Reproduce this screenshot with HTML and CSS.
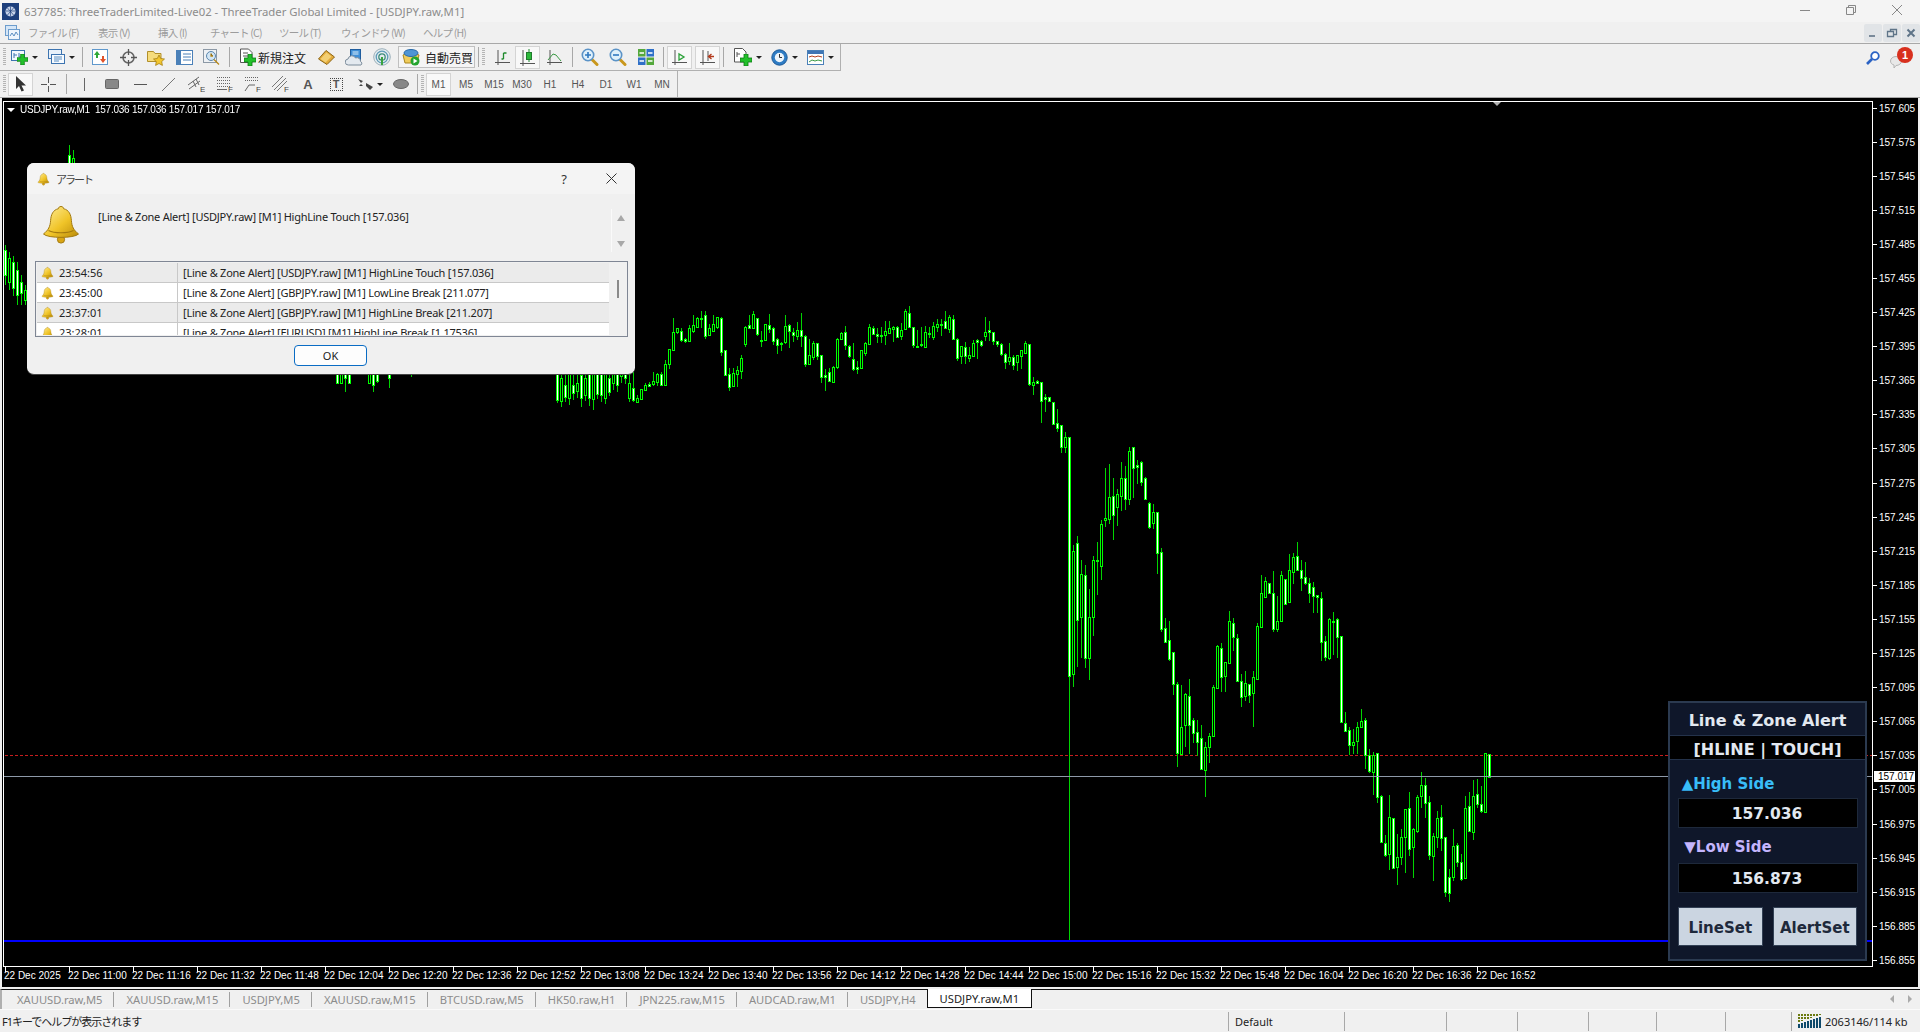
FILE: index.html
```html
<!DOCTYPE html>
<html lang="ja">
<head>
    <meta charset="UTF-8">
    <title>637785: ThreeTraderLimited-Live02</title>
    <link rel="stylesheet" href="styles.css">
</head>
<body>
    <svg class="defs" width="0" height="0">
        <defs>
            <linearGradient id="gold" x1="0" y1="0" x2="1" y2="1">
                <stop offset="0" stop-color="#fff0a0"/>
                <stop offset="0.55" stop-color="#f0c428"/>
                <stop offset="1" stop-color="#b98a08"/>
            </linearGradient>
            <symbol id="bell" viewBox="0 0 40 40">
                <circle cx="20" cy="35.5" r="3.6" fill="#d9a514" stroke="#a37a10"/>
                <path d="M20 2.5c-1.5 0-2.5.8-2.6 2.2C12 6 10 10.500 9.600 16.500 9.200 22.500 7.500 26 2.500 30c4 4.500 31 4.500 35 0-5-4-6.700-7.500-7.100-13.500C30 10.500 28 6 22.600 4.700 22.500 3.300 21.500 2.500 20 2.500z" fill="url(#gold)" stroke="#a37a10"/>
                <path d="M7.500 26.500c6 3 19 3 25 0" fill="none" stroke="#a37a10" stroke-width="1.200"/>
            </symbol>
            <symbol id="plus" viewBox="0 0 12 12">
                <path d="M4 0h4v4h4v4H8v4H4V8H0V4h4z" fill="#22c02a" stroke="#0c7a14" stroke-width="0.800"/>
            </symbol>
            <symbol id="lens" viewBox="0 0 18 18">
                <path d="M10.500 11l5.500 5.500" stroke="#c9971c" stroke-width="3" stroke-linecap="round"/>
                <circle cx="7" cy="7" r="5.700" fill="#dff0fb" stroke="#5b93c7" stroke-width="1.600"/>
            </symbol>
        </defs>
    </svg>

    <div class="app">
        <header class="titlebar">
            <svg class="app-icon" width="17" height="17" viewBox="0 0 17 17">
                <rect width="17" height="17" fill="#1d3f7c"/>
                <circle cx="8.500" cy="8.500" r="5" fill="#c8d4ea"/>
                <path d="M4 8h9M8.500 3.500v10M5.500 5l6 7M11.500 5l-6 7" stroke="#1d3f7c" stroke-width="0.700"/>
            </svg>
            <span class="title-text">637785: ThreeTraderLimited-Live02 - ThreeTrader Global Limited - [USDJPY.raw,M1]</span>
            <div class="win-controls">
                <svg width="46" height="22" viewBox="0 0 46 22"><path d="M18 10.500h10" stroke="#888"/></svg>
                <svg width="46" height="22" viewBox="0 0 46 22"><path d="M18.500 7.500h7v7h-7zM20.500 7.500v-2h7v7h-2" fill="none" stroke="#888"/></svg>
                <svg width="46" height="22" viewBox="0 0 46 22"><path d="M18 5l10 10M28 5L18 15" stroke="#888"/></svg>
            </div>
        </header>

        <nav class="menubar">
            <svg class="menu-icon" width="15" height="15" viewBox="0 0 15 15">
                <rect x="0.500" y="0.500" width="11" height="10" fill="#d5e6f7" stroke="#6c9ccc"/>
                <rect x="3.500" y="4.500" width="11" height="10" fill="#eef5fc" stroke="#6c9ccc"/>
                <path d="M5 11l2-3 2 3 2-4 2 3" fill="none" stroke="#5a8ec2"/>
            </svg>
            <span class="menu-item m1">ファイル (F)</span>
            <span class="menu-item m2">表示 (V)</span>
            <span class="menu-item m3">挿入 (I)</span>
            <span class="menu-item m4">チャート (C)</span>
            <span class="menu-item m5">ツール (T)</span>
            <span class="menu-item m6">ウィンドウ (W)</span>
            <span class="menu-item m7">ヘルプ (H)</span>
            <div class="mdi-controls">
                <span class="mdi-btn"><svg width="10" height="10" viewBox="0 0 10 10"><path d="M1 8h6" stroke="#7a8a9a" stroke-width="2"/></svg></span>
                <span class="mdi-btn"><svg width="12" height="10" viewBox="0 0 12 10"><path d="M1.500 3.500h6v5h-6zM4.500 3V1.500h6v5H8" fill="none" stroke="#5f7488" stroke-width="1.300"/></svg></span>
                <span class="mdi-btn"><svg width="10" height="10" viewBox="0 0 10 10"><path d="M1.500 1.500l7 7M8.500 1.500l-7 7" stroke="#5f7488" stroke-width="2"/></svg></span>
            </div>
        </nav>

        <div class="toolrow row-main">
            <div class="toolbar tb-main">
                <i class="grip"></i>
                <span class="drop">
                    <svg width="17" height="16" viewBox="0 0 17 16">
                        <rect x="0.500" y="1.500" width="13" height="10" fill="#f3f8fd" stroke="#3d74b0"/>
                        <path d="M3 4v5M3 6h3M8 4v4h3" fill="none" stroke="#3d74b0"/>
                        <use href="#plus" x="6" y="5" width="11" height="11"/>
                    </svg><b class="caret"></b>
                </span>
                <span class="drop d-second">
                    <svg width="17" height="16" viewBox="0 0 17 16">
                        <rect x="0.500" y="0.500" width="13" height="9" fill="#e8f1fa" stroke="#3d74b0"/>
                        <rect x="3.500" y="5.500" width="13" height="9" fill="#f7fbff" stroke="#3d74b0"/>
                        <path d="M6 8h8M6 10h8M6 12h5" stroke="#5a8ec2"/>
                    </svg><b class="caret"></b>
                </span>
                <i class="sep"></i>
                <span class="tool">
                    <svg width="16" height="16" viewBox="0 0 16 16">
                        <rect x="0.500" y="0.500" width="15" height="15" fill="#fff" stroke="#5f98cc"/>
                        <path d="M5 2l3 4H6v3H4V6H2z" fill="#2ea836"/>
                        <path d="M11 14l-3-4h2V7h2v3h2z" fill="#e0522a"/>
                    </svg>
                </span>
                <span class="tool">
                    <svg width="17" height="17" viewBox="0 0 17 17">
                        <circle cx="8.500" cy="8.500" r="5.500" fill="none" stroke="#666" stroke-width="1.500"/>
                        <path d="M8.500 0v6M8.500 11v6M0 8.500h6M11 8.500h6" stroke="#555" stroke-width="1.300"/>
                    </svg>
                </span>
                <span class="tool">
                    <svg width="18" height="17" viewBox="0 0 18 17">
                        <path d="M0.500 2.500h6l1.500 2h6v8h-13.500z" fill="#f6dc7c" stroke="#b18f2a"/>
                        <path d="M12 6l1.700 3.500 3.800.5-2.800 2.600.7 3.800-3.400-1.900-3.400 1.900.7-3.800L6.500 10l3.800-.5z" fill="#f2c62e" stroke="#a67f12" stroke-width="0.800"/>
                    </svg>
                </span>
                <span class="tool">
                    <svg width="17" height="15" viewBox="0 0 17 15">
                        <rect x="0.500" y="0.500" width="16" height="14" fill="#fff" stroke="#4a80b8"/>
                        <rect x="1" y="1" width="4" height="13" fill="#4a80b8"/>
                        <path d="M7 4h8M7 7h8M7 10h8" stroke="#4a80b8"/>
                    </svg>
                </span>
                <span class="tool">
                    <svg width="18" height="18" viewBox="0 0 18 18">
                        <rect x="0.500" y="1.500" width="13" height="13" fill="#eef1f4" stroke="#8c99a6"/>
                        <circle cx="8" cy="8" r="4.500" fill="#d2e6f5" stroke="#5b86ad"/>
                        <path d="M8 5.500V8h2M11 11.500l5 5" stroke="#b8891a" stroke-width="1.300"/>
                    </svg>
                </span>
                <i class="sep"></i>
                <span class="order">
                    <svg width="16" height="18" viewBox="0 0 16 18">
                        <path d="M0.500 1h8l3.500 3.500v10h-11.500z" fill="#fff" stroke="#555"/>
                        <path d="M3 5h5M3 8h6" stroke="#555"/>
                        <use href="#plus" x="4" y="6" width="12" height="12"/>
                    </svg>
                    <span class="tool-label">新規注文</span>
                </span>
                <span class="tool">
                    <svg width="17" height="15" viewBox="0 0 17 15">
                        <path d="M0.500 9L8 0.500 16.500 7 9 14.500z" fill="#e2ab3a" stroke="#8c6516"/>
                        <path d="M2.500 9L8.500 2.500l5 4-6 6z" fill="#f3cf73"/>
                    </svg>
                </span>
                <span class="tool">
                    <svg width="18" height="17" viewBox="0 0 18 17">
                        <rect x="5.500" y="0.500" width="10" height="11" fill="#3f8ed6" stroke="#1f5d9e"/>
                        <path d="M7.500 3h6M7.500 5h6" stroke="#dff0fb"/>
                        <path d="M3.500 16a3 3 0 0 1-.5-6 4 4 0 0 1 7.500-1 3.500 3.500 0 0 1 5 3.500 2 2 0 0 1 .5 3.500z" fill="#e3e9ef" stroke="#7b8b9a"/>
                    </svg>
                </span>
                <span class="tool">
                    <svg width="18" height="18" viewBox="0 0 18 18">
                        <circle cx="9" cy="9" r="8.300" fill="#e4ecef" stroke="#9cb0ba"/>
                        <circle cx="9" cy="9" r="5.800" fill="none" stroke="#5e9bb8" stroke-width="1.300"/>
                        <circle cx="9" cy="9" r="3.200" fill="none" stroke="#3f8d7c" stroke-width="1.300"/>
                        <path d="M9 9v8" stroke="#39a23f" stroke-width="2"/>
                    </svg>
                </span>
                <span class="autotrade">
                    <svg width="18" height="18" viewBox="0 0 18 18">
                        <path d="M1 7l8-4 8 4-2 8H3z" fill="#f0cc5c" stroke="#a9861e"/>
                        <ellipse cx="9" cy="5" rx="7" ry="3.500" fill="#4f95d4" stroke="#2a6aa8"/>
                        <circle cx="13" cy="13" r="4.500" fill="#24a52e"/>
                        <path d="M11.500 10.500v5l4-2.500z" fill="#fff"/>
                    </svg>
                    <span class="tool-label">自動売買</span>
                </span>
                <i class="sep"></i>
                <i class="grip"></i>
                <span class="tool t-bar">
                    <svg width="15" height="15" viewBox="0 0 15 15">
                        <path d="M3 0v15M0 12.500h15" stroke="#555"/>
                        <path d="M8.500 9V3M6.500 9h2M8.500 3h3" stroke="#1f8a2c" stroke-width="1.300" fill="none"/>
                    </svg>
                </span>
                <span class="tool t-active">
                    <svg width="15" height="17" viewBox="0 0 15 17">
                        <path d="M3 1v16M0 14.500h15" stroke="#555"/>
                        <path d="M9 0v13" stroke="#1f8a2c"/>
                        <rect x="6.500" y="3.500" width="5" height="7" fill="#2cb83a" stroke="#1f7a2c"/>
                    </svg>
                </span>
                <span class="tool t-line">
                    <svg width="15" height="15" viewBox="0 0 15 15">
                        <path d="M3 0v15M0 12.500h15" stroke="#555"/>
                        <path d="M1 10l5-6 3 1 5 6" fill="none" stroke="#3b9a45"/>
                    </svg>
                </span>
                <i class="sep"></i>
                <span class="tool">
                    <svg width="18" height="18" viewBox="0 0 18 18">
                        <use href="#lens" width="18" height="18"/>
                        <path d="M4 7h6M7 4v6" stroke="#2f78c0" stroke-width="1.600"/>
                    </svg>
                </span>
                <span class="tool">
                    <svg width="18" height="18" viewBox="0 0 18 18">
                        <use href="#lens" width="18" height="18"/>
                        <path d="M4 7h6" stroke="#2f78c0" stroke-width="1.600"/>
                    </svg>
                </span>
                <span class="tool">
                    <svg width="16" height="16" viewBox="0 0 16 16">
                        <rect width="7.500" height="7.500" fill="#54a83c"/>
                        <rect x="8.500" width="7.500" height="7.500" fill="#2f70c8"/>
                        <rect y="8.500" width="7.500" height="7.500" fill="#2f70c8"/>
                        <rect x="8.500" y="8.500" width="7.500" height="7.500" fill="#54a83c"/>
                        <path d="M1.500 4h4.500M10 4h4.500M1.500 12h4.500M10 12h4.500" stroke="#fff" stroke-width="1.500"/>
                    </svg>
                </span>
                <i class="sep"></i>
                <span class="tool t-active t-first">
                    <svg width="15" height="15" viewBox="0 0 15 15">
                        <path d="M3 0v15M0 12.500h15" stroke="#555"/>
                        <path d="M7 4v6l5-3z" fill="none" stroke="#2ba238" stroke-width="1.300"/>
                    </svg>
                </span>
                <span class="tool t-active">
                    <svg width="15" height="15" viewBox="0 0 15 15">
                        <path d="M3 0v15M0 12.500h15M8 1v10" stroke="#555"/>
                        <path d="M8 6.500h6M11.500 4l-3 2.500 3 2.500" fill="none" stroke="#b33a1c" stroke-width="1.300"/>
                    </svg>
                </span>
                <i class="sep"></i>
                <span class="drop d-right">
                    <svg width="18" height="18" viewBox="0 0 18 18">
                        <path d="M0.500 0.500h8l3.500 3.500v10h-11.500z" fill="#fff" stroke="#555"/>
                        <path d="M3 4v5M3 6h3" stroke="#555"/>
                        <use href="#plus" x="6" y="6" width="12" height="12"/>
                    </svg><b class="caret"></b>
                </span>
                <span class="drop d-right">
                    <svg width="17" height="17" viewBox="0 0 17 17">
                        <circle cx="8.500" cy="8.500" r="7.700" fill="#2e7cc4" stroke="#1d5a98"/>
                        <circle cx="8.500" cy="8.500" r="4.700" fill="#eef5fb"/>
                        <path d="M8.500 5v3.500h2.500" fill="none" stroke="#333"/>
                    </svg><b class="caret"></b>
                </span>
                <span class="drop d-right">
                    <svg width="17" height="15" viewBox="0 0 17 15">
                        <rect x="0.500" y="0.500" width="16" height="14" fill="#fff" stroke="#4a80b8"/>
                        <rect x="1" y="1" width="15" height="3" fill="#3f75b4"/>
                        <path d="M2 7l3-1 3 1 3-1 4 1" fill="none" stroke="#b3401c"/>
                        <path d="M2 12l3-2 3 1 3-1 4 1" fill="none" stroke="#3b9a45"/>
                    </svg><b class="caret"></b>
                </span>
            </div>
            <svg class="search-icon" width="14" height="14" viewBox="0 0 14 14">
                <circle cx="9" cy="5" r="3.800" fill="#fff" stroke="#2a62c4" stroke-width="1.800"/>
                <path d="M6 8l-5 5" stroke="#2a62c4" stroke-width="2.600"/>
            </svg>
            <div class="notify">
                <svg width="14" height="13" viewBox="0 0 14 13">
                    <path d="M6 .5c3 0 5.500 2 5.500 4.500S9 9.500 6 9.500l-2 2.500v-3C2 8.500.500 7 .500 5 .500 2.500 3 .500 6 .500z" fill="#e8e8e8" stroke="#b4b4b4"/>
                </svg>
                <span class="badge">1</span>
            </div>
        </div>

        <div class="toolrow row-draw">
            <div class="toolbar tb-draw">
                <i class="grip"></i>
                <span class="tool d-active">
                    <svg width="11" height="16" viewBox="0 0 11 16"><path d="M1 0v13l3-3 2.500 5.500 2.500-1L6.500 9.500H11z" fill="#333"/></svg>
                </span>
                <span class="tool d-cross">
                    <svg width="15" height="15" viewBox="0 0 15 15"><path d="M7.500 0v6M7.500 9v6M0 7.500h6M9 7.500h6" stroke="#555"/></svg>
                </span>
                <i class="sep"></i>
                <span class="tool"><svg width="3" height="13" viewBox="0 0 3 13"><path d="M1.500 0v13" stroke="#666"/></svg></span>
                <span class="tool"><svg width="14" height="10" viewBox="0 0 14 10"><rect x="0.500" y="0.500" width="13" height="9" rx="1" fill="#888" stroke="#666"/></svg></span>
                <span class="tool"><svg width="13" height="3" viewBox="0 0 13 3"><path d="M0 1.500h13" stroke="#555"/></svg></span>
                <span class="tool"><svg width="13" height="13" viewBox="0 0 13 13"><path d="M0 13L13 0" stroke="#777"/></svg></span>
                <span class="tool">
                    <svg width="17" height="16" viewBox="0 0 17 16">
                        <path d="M0 9l11-8M1 13l11-8M5 5l3 6M8 3l3 6" stroke="#666" fill="none"/>
                        <text x="12" y="16" class="svg-letter">E</text>
                    </svg>
                </span>
                <span class="tool">
                    <svg width="17" height="16" viewBox="0 0 17 16">
                        <path d="M1 1.500h13M1 4.500h13M1 7.500h13M1 10.500h13" stroke="#666" stroke-dasharray="1 1"/>
                        <path d="M1 13.500h10" stroke="#666"/>
                        <text x="12" y="16" class="svg-letter">F</text>
                    </svg>
                </span>
                <span class="tool">
                    <svg width="17" height="16" viewBox="0 0 17 16">
                        <path d="M1 1.500h14M1 4.500h14" stroke="#666" stroke-dasharray="1 1"/>
                        <path d="M1 15l4-6h6" fill="none" stroke="#666"/>
                        <text x="12" y="16" class="svg-letter">F</text>
                    </svg>
                </span>
                <span class="tool">
                    <svg width="17" height="16" viewBox="0 0 17 16">
                        <path d="M0 11L11 0M2 14L14 2M5 15L15 5" stroke="#777"/>
                        <text x="12" y="16" class="svg-letter">F</text>
                    </svg>
                </span>
                <span class="tool glyph-a">A</span>
                <span class="tool">
                    <span class="glyph-t">T</span>
                </span>
                <span class="drop d-arrows">
                    <svg width="15" height="13" viewBox="0 0 15 13">
                        <path d="M0 1l5 2-2 2zM3 6l2 2h-4zM8 5l7 4-3 3-4-4z" fill="#444"/>
                    </svg><b class="caret"></b>
                </span>
                <span class="tool t-ellipse"><svg width="16" height="10" viewBox="0 0 16 10"><ellipse cx="8" cy="5" rx="7.500" ry="4.500" fill="#888" stroke="#666"/></svg></span>
                <i class="sep"></i>
                <i class="grip grip-tf"></i>
                <span class="tf d-active tf-first">M1</span>
                <span class="tf">M5</span>
                <span class="tf">M15</span>
                <span class="tf">M30</span>
                <span class="tf">H1</span>
                <span class="tf">H4</span>
                <span class="tf">D1</span>
                <span class="tf">W1</span>
                <span class="tf">MN</span>
            </div>
        </div>

        <main class="chart">
            <div class="plot">
                <canvas id="candles" class="candles"></canvas>
                <div class="chart-label"><b class="label-caret"></b>USDJPY.raw,M1&nbsp; 157.036 157.036 157.017 157.017</div>
            </div>
            <div class="yaxis">
                <span class="ylabel">157.605</span><span class="ylabel">157.575</span><span class="ylabel">157.545</span>
                <span class="ylabel">157.515</span><span class="ylabel">157.485</span><span class="ylabel">157.455</span>
                <span class="ylabel">157.425</span><span class="ylabel">157.395</span><span class="ylabel">157.365</span>
                <span class="ylabel">157.335</span><span class="ylabel">157.305</span><span class="ylabel">157.275</span>
                <span class="ylabel">157.245</span><span class="ylabel">157.215</span><span class="ylabel">157.185</span>
                <span class="ylabel">157.155</span><span class="ylabel">157.125</span><span class="ylabel">157.095</span>
                <span class="ylabel">157.065</span><span class="ylabel">157.035</span><span class="ylabel">157.005</span>
                <span class="ylabel">156.975</span><span class="ylabel">156.945</span><span class="ylabel">156.915</span>
                <span class="ylabel">156.885</span><span class="ylabel">156.855</span>
                <span class="price-tag">157.017</span>
            </div>
            <div class="xaxis">
                <span class="xlabel">22 Dec 2025</span><span class="xlabel">22 Dec 11:00</span><span class="xlabel">22 Dec 11:16</span>
                <span class="xlabel">22 Dec 11:32</span><span class="xlabel">22 Dec 11:48</span><span class="xlabel">22 Dec 12:04</span>
                <span class="xlabel">22 Dec 12:20</span><span class="xlabel">22 Dec 12:36</span><span class="xlabel">22 Dec 12:52</span>
                <span class="xlabel">22 Dec 13:08</span><span class="xlabel">22 Dec 13:24</span><span class="xlabel">22 Dec 13:40</span>
                <span class="xlabel">22 Dec 13:56</span><span class="xlabel">22 Dec 14:12</span><span class="xlabel">22 Dec 14:28</span>
                <span class="xlabel">22 Dec 14:44</span><span class="xlabel">22 Dec 15:00</span><span class="xlabel">22 Dec 15:16</span>
                <span class="xlabel">22 Dec 15:32</span><span class="xlabel">22 Dec 15:48</span><span class="xlabel">22 Dec 16:04</span>
                <span class="xlabel">22 Dec 16:20</span><span class="xlabel">22 Dec 16:36</span><span class="xlabel">22 Dec 16:52</span>
            </div>

            <section class="dialog">
                <div class="dialog-head">
                    <svg class="bell-small" width="13" height="14"><use href="#bell" width="13" height="14"/></svg>
                    <span class="dialog-title">アラート</span>
                    <span class="dialog-help">?</span>
                    <svg class="dialog-close" width="11" height="11" viewBox="0 0 11 11"><path d="M.5.500l10 10M10.500.500l-10 10" stroke="#333"/></svg>
                </div>
                <div class="dialog-msg">
                    <svg class="bell-big" width="40" height="40"><use href="#bell" width="40" height="40"/></svg>
                    <span class="msg-text">[Line &amp; Zone Alert] [USDJPY.raw] [M1] HighLine Touch [157.036]</span>
                    <div class="msg-scroll"><b class="arrow-up"></b><b class="arrow-down"></b></div>
                </div>
                <div class="alert-list">
                    <div class="alert-rows">
                        <div class="alert-row">
                            <span class="cell-time"><svg width="13" height="14"><use href="#bell" width="13" height="14"/></svg>23:54:56</span>
                            <span class="cell-msg">[Line &amp; Zone Alert] [USDJPY.raw] [M1] HighLine Touch [157.036]</span>
                        </div>
                        <div class="alert-row">
                            <span class="cell-time"><svg width="13" height="14"><use href="#bell" width="13" height="14"/></svg>23:45:00</span>
                            <span class="cell-msg">[Line &amp; Zone Alert] [GBPJPY.raw] [M1] LowLine Break [211.077]</span>
                        </div>
                        <div class="alert-row">
                            <span class="cell-time"><svg width="13" height="14"><use href="#bell" width="13" height="14"/></svg>23:37:01</span>
                            <span class="cell-msg">[Line &amp; Zone Alert] [GBPJPY.raw] [M1] HighLine Break [211.207]</span>
                        </div>
                        <div class="alert-row">
                            <span class="cell-time"><svg width="13" height="14"><use href="#bell" width="13" height="14"/></svg>23:28:01</span>
                            <span class="cell-msg">[Line &amp; Zone Alert] [EURUSD] [M1] HighLine Break [1.17536]</span>
                        </div>
                    </div>
                    <div class="list-scroll"><i class="list-thumb"></i></div>
                </div>
                <div class="dialog-foot"><button class="ok-btn">OK</button></div>
            </section>

            <section class="panel">
                <div class="panel-title">Line &amp; Zone Alert</div>
                <div class="panel-mode">[HLINE | TOUCH]</div>
                <div class="panel-body">
                    <div class="side side-high">▲High Side</div>
                    <div class="price-box">157.036</div>
                    <div class="side side-low">▼Low Side</div>
                    <div class="price-box">156.873</div>
                    <div class="panel-btns">
                        <button class="panel-btn">LineSet</button>
                        <button class="panel-btn">AlertSet</button>
                    </div>
                </div>
            </section>
        </main>

        <div class="tabstrip">
            <div class="tabs">
                <span class="tab">XAUUSD.raw,M5</span>
                <span class="tab">XAUUSD.raw,M15</span>
                <span class="tab">USDJPY,M5</span>
                <span class="tab">XAUUSD.raw,M15</span>
                <span class="tab">BTCUSD.raw,M5</span>
                <span class="tab">HK50.raw,H1</span>
                <span class="tab">JPN225.raw,M15</span>
                <span class="tab">AUDCAD.raw,M1</span>
                <span class="tab tab-last">USDJPY,H4</span>
                <span class="tab tab-active">USDJPY.raw,M1</span>
                <span class="tab-nav"><b class="nav-left"></b><b class="nav-right"></b></span>
            </div>
        </div>

        <footer class="statusbar">
            <span class="st st-help">F1キーでヘルプが表示されます</span>
            <span class="st st-profile">Default</span>
            <span class="st st-a"></span>
            <span class="st st-b"></span>
            <span class="st st-c"></span>
            <span class="st st-d"></span>
            <span class="st st-e"></span>
            <span class="st st-f"></span>
            <span class="st st-conn">
                <svg width="23" height="14" viewBox="0 0 23 14">
                    <path d="M1 0v8M4 0v7M7 0v6M10 0v5M13 0v4M16 0v3M19 0v2M22 0v1" stroke="#6b7a10" stroke-width="2" stroke-dasharray="2 1"/>
                    <path d="M1 10v4M4 9v5M7 8v6M10 7v7M13 6v8M16 5v9M19 4v10M22 3v11" stroke="#0f4a6b" stroke-width="2"/>
                </svg>
                2063146/114 kb
            </span>
        </footer>
    </div>

    <script src="chart.js"></script>
</body>
</html>
```

FILE: styles.css
```css
* {
    box-sizing: border-box;
}
html, body {
    margin: 0;
    height: 100%;
}
body {
    overflow: hidden;
    background-color: #f0f0f0;
    font-family: "Noto Sans", "Noto Sans CJK JP", sans-serif;
    font-size: 11px;
    color: #222;
}
.defs {
    position: absolute;
}
.app {
    width: 1920px;
    height: 1032px;
    display: flex;
    flex-direction: column;
}

/* title bar and menu */
.titlebar {
    height: 22px;
    display: flex;
    align-items: center;
    padding-left: 2px;
    background-color: #f4f4f4;
}
.title-text {
    margin-left: 5px;
    font-size: 11.350px;
    color: #8c8c8c;
}
.win-controls {
    margin-left: auto;
    display: flex;
}
.menubar {
    height: 22px;
    position: relative;
    display: flex;
    align-items: center;
    padding-left: 5px;
    border-bottom: 1px solid #a8a8a8;
    font-family: "Noto Sans CJK JP", sans-serif;
    font-size: 10.500px;
    letter-spacing: -0.800px;
    color: #9c9c9c;
}
.menu-item {
    white-space: nowrap;
}
.m1 { margin-left: 8px; width: 70px; }
.m2 { width: 60px; }
.m3 { width: 52px; }
.m4 { width: 69px; }
.m5 { width: 62px; }
.m6 { width: 82px; }
.mdi-controls {
    margin-left: auto;
    display: flex;
    gap: 1px;
}
.mdi-btn {
    width: 18px;
    height: 18px;
    display: flex;
    align-items: center;
    justify-content: center;
    background-color: #e1e4e7;
    border-radius: 2px;
}

/* toolbars */
.toolrow {
    height: 27px;
    position: relative;
    display: flex;
    align-items: stretch;
}
.row-draw {
    border-bottom: 1px solid #a8a8a8;
}
.toolbar {
    display: flex;
    align-items: center;
    padding-left: 3px;
}
.tb-main {
    width: 841px;
    border-right: 1px solid #b0b0b0;
    border-bottom: 1px solid #b0b0b0;
}
.tb-draw {
    width: 678px;
    border-right: 1px solid #b0b0b0;
}
.grip {
    width: 3px;
    height: 18px;
    flex-shrink: 0;
    background: repeating-linear-gradient(#b4b4b4 0 1px, transparent 1px 2px);
}
.sep {
    width: 1px;
    height: 20px;
    flex-shrink: 0;
    margin: 0 3px;
    background-color: #a8a8a8;
}
.tool {
    width: 28px;
    height: 23px;
    flex-shrink: 0;
    display: flex;
    align-items: center;
    justify-content: center;
}
.drop {
    width: 37px;
    flex-shrink: 0;
    display: flex;
    align-items: center;
    padding-left: 5px;
}
.d-second {
    width: 36px;
}
.d-right {
    width: 36.500px;
    padding-left: 7px;
}
.caret {
    width: 0;
    height: 0;
    margin-left: 4px;
    border-left: 3px solid transparent;
    border-right: 3px solid transparent;
    border-top: 3px solid #222;
}
.order {
    width: 79px;
    flex-shrink: 0;
    display: flex;
    align-items: center;
    padding-left: 7px;
}
.tool-label {
    margin-left: 2px;
    font-family: "Noto Sans CJK JP", sans-serif;
    font-size: 12px;
    color: #222;
    white-space: nowrap;
}
.autotrade {
    width: 77px;
    height: 22px;
    margin-left: 2px;
    flex-shrink: 0;
    display: flex;
    align-items: center;
    gap: 3px;
    padding-left: 3px;
    border: 1px solid #c0c0c0;
    background-color: #f5f5f5;
}
.t-bar {
    width: 26px;
    margin-left: 4px;
}
.t-active {
    width: 25px;
    border: 1px solid #d4d4d4;
    background-color: #f8f8f8;
}
.t-first {
    margin-right: 3px;
}
.t-line {
    width: 29px;
}
.d-active {
    width: 25px;
    border: 1px solid #d4d4d4;
    background-color: #f9f9f9;
}
.d-active.tool {
    margin-left: 2px;
}
.d-cross {
    width: 30px;
}
.d-arrows {
    width: 38px;
    padding-left: 8px;
}
.t-ellipse {
    width: 26px;
}
.svg-letter {
    font-family: "Liberation Sans", sans-serif;
    font-size: 8px;
    fill: #444;
}
.glyph-a {
    font-family: "Liberation Sans", sans-serif;
    font-weight: bold;
    font-size: 13px;
    color: #555;
}
.glyph-t {
    width: 13px;
    height: 13px;
    display: flex;
    align-items: center;
    justify-content: center;
    border: 1px dotted #444;
    font-family: "Liberation Sans", sans-serif;
    font-weight: bold;
    font-size: 11px;
    color: #555;
}
.grip-tf {
    margin: 0 2px 0 0;
}
.tf {
    width: 28px;
    height: 23px;
    flex-shrink: 0;
    display: flex;
    align-items: center;
    justify-content: center;
    font-family: "Liberation Sans", sans-serif;
    font-size: 10px;
    color: #555;
}
.tf.tf-first {
    width: 25px;
    margin-right: 1px;
}
.search-icon {
    position: absolute;
    left: 1866px;
    top: 7px;
}
.notify {
    position: absolute;
    left: 1890px;
    top: 3px;
    width: 26px;
    height: 24px;
}
.notify svg {
    position: absolute;
    left: 0;
    top: 9px;
}
.badge {
    position: absolute;
    left: 7px;
    top: 0;
    width: 16px;
    height: 16px;
    border-radius: 50%;
    background-color: #d8301e;
    color: #fff;
    font-family: "Liberation Sans", sans-serif;
    font-weight: bold;
    font-size: 11px;
    line-height: 16px;
    text-align: center;
}

/* chart window */
.chart {
    height: 889px;
    margin: 0 2px;
    padding: 3px 0 0 1px;
    position: relative;
    display: grid;
    grid-template-columns: 1870px 1fr;
    grid-template-rows: 866px 20px;
    background-color: #000;
    color: #fff;
    font-family: "Liberation Sans", sans-serif;
    font-size: 10px;
}
.plot {
    position: relative;
    border: 1px solid #fff;
}
.candles {
    position: absolute;
    left: 0;
    top: 0;
    width: 100%;
    height: 100%;
}
.chart-label {
    position: absolute;
    left: 3px;
    top: 1px;
    display: flex;
    align-items: center;
    height: 13px;
    white-space: nowrap;
    letter-spacing: -0.250px;
}
.label-caret {
    width: 0;
    height: 0;
    margin-right: 5px;
    border-left: 4px solid transparent;
    border-right: 4px solid transparent;
    border-top: 4px solid #fff;
}
.yaxis {
    position: relative;
    margin-top: -10px;
    height: 876px;
}
.ylabel {
    height: 34.100px;
    display: flex;
    align-items: center;
}
.ylabel::before {
    content: "";
    width: 4px;
    height: 1px;
    margin-right: 2px;
    background-color: #fff;
}
.price-tag {
    position: absolute;
    left: 1px;
    top: 680px;
    width: 41px;
    height: 11px;
    padding-left: 4px;
    background-color: #fff;
    color: #000;
    line-height: 11px;
}
.xaxis {
    grid-column: 1 / 3;
    display: flex;
    padding-left: 1px;
}
.xlabel {
    width: 64px;
    flex-shrink: 0;
    position: relative;
    padding-top: 3px;
    white-space: nowrap;
}
.xlabel::before {
    content: "";
    position: absolute;
    left: 1px;
    top: 0;
    width: 1px;
    height: 5px;
    background-color: #fff;
}

/* alert dialog */
.dialog {
    position: absolute;
    left: 25px;
    top: 65px;
    width: 608px;
    height: 212px;
    display: flex;
    flex-direction: column;
    border-radius: 7px;
    border-bottom: 1px solid #444;
    overflow: hidden;
    background-color: #f0f0f0;
    color: #222;
    font-family: "Noto Sans", "Noto Sans CJK JP", sans-serif;
    font-size: 11px;
}
.dialog-head {
    height: 31px;
    flex-shrink: 0;
    display: flex;
    align-items: center;
    padding-left: 10px;
    background-color: #f4f4f4;
}
.dialog-title {
    margin-left: 6px;
    font-family: "Noto Sans CJK JP", sans-serif;
    font-size: 11px;
    letter-spacing: -2px;
    color: #444;
}
.dialog-help {
    margin-left: auto;
    font-size: 13px;
    color: #333;
}
.dialog-close {
    margin: 0 18px 0 39px;
}
.dialog-msg {
    height: 67px;
    flex-shrink: 0;
    display: flex;
    align-items: flex-start;
    padding-left: 14px;
}
.bell-big {
    margin-top: 10px;
}
.msg-text {
    margin: 15px 0 0 17px;
    letter-spacing: -0.240px;
}
.msg-scroll {
    margin: 15px 0 0 auto;
    width: 24px;
    height: 43px;
    position: relative;
    border-left: 1px solid #fafafa;
}
.arrow-up, .arrow-down {
    position: absolute;
    left: 5px;
    width: 0;
    height: 0;
    border-left: 4px solid transparent;
    border-right: 4px solid transparent;
}
.arrow-up {
    top: 6px;
    border-bottom: 6px solid #a8a8a8;
}
.arrow-down {
    top: 32px;
    border-top: 6px solid #a8a8a8;
}
.alert-list {
    width: 593px;
    height: 76px;
    margin-left: 8px;
    flex-shrink: 0;
    display: flex;
    padding: 1px;
    border: 1px solid #7f8694;
}
.alert-rows {
    width: 572px;
    height: 72px;
    overflow: hidden;
}
.alert-row {
    height: 20px;
    display: flex;
    align-items: center;
    border-bottom: 1px solid #c8c8c8;
    background-color: #fff;
    white-space: nowrap;
}
.alert-row:nth-child(odd) {
    background-color: #ebebeb;
}
.cell-time {
    width: 141px;
    height: 100%;
    flex-shrink: 0;
    display: flex;
    align-items: center;
    gap: 5px;
    padding-left: 4px;
    border-right: 1px solid #c8c8c8;
}
.cell-msg {
    padding-left: 5px;
    letter-spacing: -0.240px;
}
.list-scroll {
    flex: 1;
    position: relative;
}
.list-thumb {
    position: absolute;
    left: 8px;
    top: 17px;
    width: 2px;
    height: 18px;
    background-color: #8a8a8a;
}
.dialog-foot {
    display: flex;
    justify-content: center;
    padding-top: 8px;
    padding-right: 1px;
}
.ok-btn {
    width: 73px;
    height: 21px;
    padding: 0;
    border: 1px solid #0a6cc4;
    border-radius: 4px;
    background-color: #fdfdfd;
    color: #222;
    font-family: inherit;
    font-size: 11px;
}

/* line and zone alert panel */
.panel {
    position: absolute;
    left: 1666px;
    top: 603px;
    width: 199px;
    height: 260px;
    display: flex;
    flex-direction: column;
    border: 2px solid #2b3a50;
    background-color: #0f172a;
    color: #e2e8f0;
    font-family: "DejaVu Sans", sans-serif;
    font-weight: bold;
}
.panel-title {
    height: 33px;
    display: flex;
    align-items: center;
    justify-content: center;
    padding-top: 3px;
    border-bottom: 1px solid #24324a;
    font-size: 16px;
}
.panel-mode {
    height: 24px;
    display: flex;
    align-items: center;
    justify-content: center;
    padding-top: 3px;
    border-bottom: 1px solid #24324a;
    background-color: #000;
    font-size: 16px;
}
.panel-body {
    padding: 9px 8px 0;
}
.side {
    width: 100px;
    height: 29px;
    display: flex;
    align-items: center;
    justify-content: center;
    font-size: 15px;
}
.side-high {
    color: #38bdf8;
}
.side-low {
    height: 35px;
    padding-top: 3px;
    color: #c4b5fd;
}
.price-box {
    width: 180px;
    height: 30px;
    display: flex;
    align-items: center;
    justify-content: center;
    padding: 1px 2px 0 0;
    border: 1px solid #1e293b;
    background-color: #000;
    font-size: 15.500px;
}
.panel-btns {
    margin-top: 14px;
    display: flex;
    gap: 10px;
}
.panel-btn {
    width: 85px;
    height: 39px;
    padding: 2px 0 0;
    border: 1px solid #334155;
    background-color: #cbd5e1;
    color: #1e293b;
    font-family: inherit;
    font-weight: bold;
    font-size: 15px;
}

/* tabs and status bar */
.tabstrip {
    height: 22px;
    padding-top: 2px;
}
.tabs {
    height: 20px;
    display: flex;
    align-items: flex-start;
    border-top: 1px solid #111;
    border-left: 2px solid #b0b0b0;
    font-family: "Noto Sans", sans-serif;
    font-size: 11.200px;
    color: #8c8c8c;
}
.tab {
    height: 15px;
    margin-top: 2px;
    display: flex;
    align-items: center;
    padding: 0 11px 0 12px;
    border-right: 1px solid #a0a0a0;
    white-space: nowrap;
}
.tab:first-child {
    padding-left: 15px;
}
.tab-last {
    border-right: none;
}
.tab-active {
    height: 19px;
    margin-top: -1px;
    padding: 0 12px;
    background-color: #fff;
    border: 1px solid #111;
    border-top: none;
    color: #222;
}
.tab-nav {
    margin-left: auto;
    height: 18px;
    display: flex;
    align-items: center;
    gap: 14px;
    padding-right: 8px;
}
.nav-left, .nav-right {
    width: 0;
    height: 0;
    border-top: 4px solid transparent;
    border-bottom: 4px solid transparent;
}
.nav-left {
    border-right: 4px solid #aaa;
}
.nav-right {
    border-left: 4px solid #aaa;
}
.statusbar {
    height: 23px;
    display: flex;
    align-items: center;
    font-family: "Noto Sans", "Noto Sans CJK JP", sans-serif;
    font-size: 11px;
    border-top: 1px solid #fafafa;
}
.st {
    height: 19px;
    flex-shrink: 0;
    display: flex;
    align-items: center;
    padding-left: 6px;
    border-left: 1px solid #a8a8a8;
    white-space: nowrap;
}
.st-help {
    width: 1228px;
    padding-left: 2px;
    border-left: none;
    letter-spacing: -1px;
}
.st-profile { width: 116px; }
.st-a { width: 102px; }
.st-b { width: 71px; }
.st-c { width: 71px; }
.st-d { width: 68px; }
.st-e { width: 69px; }
.st-f { width: 66px; }
.st-conn {
    gap: 4px;
    flex: 1;
}
```

FILE: chart.js
```js
// candles read off the chart: x index, then wick top, body top, body bottom, wick bottom, 1 = bear (white body)
const midCandles = [
    [300,310,320,320,0],[282,283,311,311,0],[265,271,285,285,0],[262,268,272,276,1],[232,259,267,272,0],[235,238,261,273,0],
    [232,238,270,272,1],[195,208,270,272,0],[162,162,206,222,0],[69,112,164,164,0],[100,100,111,118,0],[100,109,134,140,1],
    [130,133,137,144,1],[90,100,137,137,0],[60,91,108,114,0],[66,69,95,100,0],[48,68,72,100,1],[48,60,122,132,1],
    [86,100,120,124,0],[60,88,107,110,0],[66,67,95,102,0],[66,70,170,183,1],[166,166,240,243,1],[220,238,275,288,1],
    [220,235,273,276,0],[212,225,237,275,0],[180,190,227,252,0],[92,97,147,157,0],[60,89,98,100,1],[48,58,100,100,0],
    [69,70,116,124,1],[108,136,138,156,1],[87,88,134,136,0],[57,91,101,114,1],[97,100,137,150,1],[128,132,150,177,1],
    [142,145,147,168,1],[60,94,140,147,0],[87,91,109,160,1],[100,112,119,140,1],[82,106,122,135,0],[55,106,122,156,1],
    [121,123,206,216,1],[132,181,206,208,0],[139,145,185,195,0],[144,145,182,194,1],[180,181,245,264,1],[222,241,245,288,1],
    [220,232,258,262,1],[214,217,260,261,0],[128,132,215,222,0],[112,115,132,135,0],[93,112,150,165,1],[150,153,183,190,1],
    [144,193,222,228,1],[198,217,221,236,1],[165,166,218,218,0],[142,145,173,183,0],[87,97,147,150,0],[92,100,116,118,1],
    [100,118,122,144,1],[97,121,123,145,1],[79,108,120,150,0],[79,100,113,114,0],[93,95,102,140,0],[93,95,125,127,1],
    [85,106,123,135,0],[43,48,102,103,0],[33,55,96,98,1],[95,97,150,158,1],[106,154,155,156,1],[96,146,148,155,1],
    [93,112,155,155,0],[97,114,118,130,1],[82,94,125,135,0],[72,88,95,110,0],[72,88,89,124,1],[48,79,98,100,1],
    [60,67,102,114,0],[60,72,131,133,1],[130,133,188,197,1],[153,153,183,207,0],[142,157,183,207,1],[155,181,189,202,0],
    [135,145,182,182,0],[133,136,140,192,1],[136,139,149,156,1],[67,112,122,138,0],[79,106,111,138,1],[112,112,137,150,1],
    [137,139,146,156,1],[145,146,177,183,1],[175,176,200,222,1],[144,187,197,210,0],[180,187,209,225,1],[180,181,200,228,0],
    [165,166,182,222,0],[139,145,173,174,0],[147,148,266,273,1],[246,262,269,300,0],[255,258,263,268,1],[262,262,317,384,1],
    [297,307,311,352,1],[307,307,317,320,1],[322,322,387,390,1],[342,385,398,410,1]
];
const rightCandles = [
    [-15,-15,52,70,1],[5,22,52,68,0],[20,22,738,1530,1],[345,363,733,772,0],[318,338,570,710,1],[390,433,562,683,0],
    [405,436,685,713,1],[478,560,685,750,0],[378,390,560,617,0],[335,391,392,495,1],[270,283,409,450,0],[113,265,270,290,0],
    [102,202,268,282,0],[145,197,256,330,1],[178,193,230,288,0],[96,145,197,243,0],[108,143,208,240,1],[52,62,208,225,0],
    [52,52,115,205,1],[90,106,110,162,1],[92,95,155,168,1],[140,143,208,210,1],[215,220,290,298,1],[222,245,280,296,0],
    [245,247,370,432,1],[354,367,598,606,1],[565,595,635,640,1],[574,631,686,692,1],[665,667,763,795,1],[757,763,970,1010,1],
    [765,890,973,975,0],[790,793,885,950,0],[748,799,885,972,1],[865,870,910,940,1],[870,907,937,978,1],[885,925,1018,1020,1],
    [937,952,1020,1100,0],[910,917,950,998,0],[766,772,917,920,0],[645,649,775,778,0],[640,655,740,785,1],[697,697,737,787,0],
    [544,574,698,702,0],[565,580,622,662,1],[613,625,752,756,1],[733,752,800,832,1],[723,760,797,812,0],[762,762,794,820,1],
    [724,742,788,890,0],[580,589,746,748,0],[435,490,590,590,0],[442,454,500,500,0],[460,460,488,488,1],[423,490,598,605,1],
    [498,574,597,605,0],[423,436,572,572,0],[447,448,522,525,1],[372,421,515,515,0],[370,382,425,462,0],[336,379,420,424,1],
    [390,421,443,483,1],[396,440,458,465,1],[445,458,490,518,1],[455,472,497,548,1],[495,495,500,550,1],[487,505,635,692,1],
    [618,632,680,693,1],[565,568,684,690,0],[546,573,575,675,1],[565,568,622,685,1],[618,619,875,880,1],[846,878,902,905,1],
    [890,901,944,975,1],[897,937,944,972,0],[877,890,932,972,0],[838,874,890,890,0],[865,871,975,1018,1],[957,976,1023,1028,1],
    [967,976,1025,1095,0],[970,970,1100,1120,1],[1095,1097,1236,1240,1],[1215,1238,1275,1282,1],[1095,1160,1272,1320,0],
    [1165,1165,1315,1318,1],[1213,1280,1310,1365,0],[1197,1222,1280,1305,0],[1137,1138,1222,1330,0],[1087,1133,1258,1278,1],
    [1195,1198,1250,1343,0],[1095,1102,1202,1210,0],[1026,1066,1097,1133,0],[1045,1066,1120,1163,1],[1098,1117,1275,1290,1],
    [1210,1218,1277,1352,0],[1143,1165,1220,1255,0],[1125,1160,1225,1262,1],[1222,1222,1385,1400,1],[1318,1342,1388,1415,1],
    [1198,1249,1340,1352,0],[1240,1246,1295,1312,1],[1272,1297,1347,1352,1],[1098,1135,1343,1346,0],[1087,1127,1202,1202,1],
    [1050,1097,1207,1230,0],[1047,1093,1122,1135,1],[1068,1122,1143,1148,1],[970,970,1145,1145,0],[973,973,1040,1040,1]
];
// what shows around the dialog, already in page pixels: x, wick top, body top, body bottom, wick bottom, bear
const sideCandles = [
    [5,245,250,275,285,1],[9,252,258,282,290,0],[13,256,262,288,296,1],[17,262,270,295,305,1],[21,275,282,293,305,1],[25,285,290,300,305,0],
    [69,145,155,172,176,1],[73,150,158,172,176,0],
    [337,360,365,383,383,1],[341,360,368,383,383,0],[345,365,370,378,392,1],[349,362,368,383,383,1],
    [369,360,368,383,383,0],[373,360,372,385,392,1],[377,360,368,381,383,1],[389,360,368,378,388,1],[411,360,366,374,377,0],
    [557,350,370,400,403,1],[561,360,378,401,407,0],[565,365,385,397,402,1],[569,362,372,398,405,0],[573,368,385,393,400,1],
    [577,365,383,391,398,0],[581,360,375,398,407,1],[585,362,378,395,401,0],[589,358,372,398,406,1],[593,355,370,399,410,0],
    [597,358,372,394,399,1],[601,352,368,395,402,1],[605,355,370,398,404,0],[609,362,378,392,396,1],[613,350,365,383,390,0],
    [617,345,360,385,392,1],[621,340,352,376,383,0],[625,342,350,378,384,1],[629,370,383,398,402,0],[633,372,388,400,402,1]
];

const canvas = document.getElementById('candles');
const box = canvas.getBoundingClientRect();
canvas.width = box.width;
canvas.height = box.height;
const ctx = canvas.getContext('2d');
ctx.translate(-Math.round(box.left), -Math.round(box.top));

function drawCandle(x, wickTop, bodyTop, bodyBottom, wickBottom, bear) {
    const top = Math.round(bodyTop);
    const height = Math.max(Math.round(bodyBottom) - top, 1);
    ctx.fillStyle = '#00d400';
    ctx.fillRect(x, Math.round(wickTop), 1, Math.round(wickBottom) - Math.round(wickTop));
    ctx.fillStyle = '#00ff00';
    ctx.fillRect(x - 1, top, 3, height + 1);
    if (height > 1) {
        ctx.fillStyle = bear ? '#ffffff' : '#000000';
        ctx.fillRect(x, top + 1, 1, height - 1);
    }
}

function drawLevel(y, color, size) {
    ctx.fillStyle = color;
    ctx.fillRect(4, y, 1868, size);
}

// red dashed level first, the candles go over it
ctx.fillStyle = '#c81e1e';
for (let x = 5; x < 1872; x += 5) {
    ctx.fillRect(x, 755, 3, 1);
}

sideCandles.forEach(c => drawCandle(c[0], c[1], c[2], c[3], c[4], c[5]));
midCandles.forEach((c, i) => drawCandle(637 + i * 4, 295 + c[0] / 3, 295 + c[1] / 3, 295 + c[2] / 3, 295 + c[3] / 3, c[4]));
rightCandles.forEach((c, i) => drawCandle(1061 + i * 4, 430 + c[0] / 3, 430 + c[1] / 3, 430 + c[2] / 3, 430 + c[3] / 3, c[4]));

drawLevel(776, '#8d99a8', 1);
drawLevel(940, '#0000ff', 2);

// chart shift marker
ctx.fillStyle = '#b0b0b0';
ctx.beginPath();
ctx.moveTo(1493, 102);
ctx.lineTo(1501, 102);
ctx.lineTo(1497, 106);
ctx.fill();
```
